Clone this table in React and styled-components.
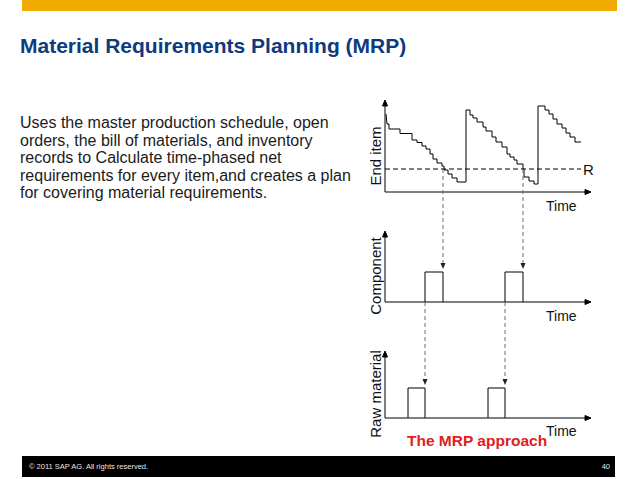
import styled, { createGlobalStyle } from "styled-components";

const GlobalStyle = createGlobalStyle`
  html, body {
    margin: 0;
    padding: 0;
    background: #ffffff;
  }
  body {
    font-family: "Liberation Sans", Arial, sans-serif;
  }
`;

const Slide = styled.div`
  width: 638px;
  height: 479px;
  display: flex;
  flex-direction: column;
  background: #ffffff;
  overflow: hidden;
`;

const TopBar = styled.div`
  height: 11px;
  margin: 0 21px 0 22px;
  background: #f0ab00;
`;

const Title = styled.h1`
  margin: 23px 0 0 20px;
  font-size: 21px;
  line-height: 24px;
  font-weight: 700;
  color: #0e3a7e;
`;

const Body = styled.div`
  margin-top: 31px;
  display: flex;
  align-items: flex-start;
`;

const Bullet = styled.p`
  width: 340px;
  margin: 0;
  padding: 25px 0 0 20px;
  font-size: 16px;
  line-height: 17.5px;
  color: #1b1b1b;
`;

const Chart = styled.svg`
  display: block;
  width: 240px;
  height: 365px;
  overflow: visible;
  font-family: "Liberation Sans", Arial, sans-serif;
`;

const Footer = styled.div`
  margin: auto 23px 2px 22px;
  height: 21px;
  background: #000000;
  color: #e6e6e6;
  display: flex;
  align-items: center;
  justify-content: space-between;
  padding: 0 5px 0 7px;
  font-size: 7.5px;
`;

const endItem =
  "M386,115 L387,125 L389,125 L389,130 L400,130 L400,134.5 L412,134.5 L412,141 L417,141 L417,143.5 L422,143.5 L422,147 L426,147 L426,150 L430,150 L430,155 L433,155 L433,160 L437,160 L437,164 L442,164 L442,167 L444,167 L444,171 L448,171 L448,175 L452,175 L452,179 L457,179 L457,183 L466,183 L466,111 " +
  "L470,111 L470,116 L473,116 L473,119 L477,119 L477,123 L483,123 L483,128 L486,128 L486,132 L492,132 L492,138 L496,138 L496,143 L502,143 L502,148 L507,148 L507,155 L510,155 L510,158 L514,158 L514,161 L517,161 L517,165 L523,165 L523,170 L524,170 L524,178 L529,178 L529,182 L534,182 L534,185 L538,185 L538,107 " +
  "L545,107 L545,111 L549,111 L549,115 L553,115 L553,120 L557,120 L557,125 L562,125 L562,129 L566,129 L566,134 L570,134 L570,138 L575,138 L575,143 L581,143";

const Axis = ({ top, base }) => (
  <g stroke="#000" strokeWidth="1" fill="none">
    <path d={`M385,${base} L385,${top + 5}`} />
    <path d={`M385,${base} L586,${base}`} />
    <path d={`M382.5,${top + 6} L385,${top} L387.5,${top + 6} Z`} fill="#000" />
    <path d={`M585,${base - 2.5} L591,${base} L585,${base + 2.5} Z`} fill="#000" />
  </g>
);

const DropArrow = ({ x, from, to }) => (
  <g>
    <path d={`M${x},${from} L${x},${to - 5}`} stroke="#6e6e6e" strokeWidth="1" strokeDasharray="4 3" fill="none" />
    <path d={`M${x - 2.5},${to - 6} L${x},${to} L${x + 2.5},${to - 6} Z`} fill="#222" />
  </g>
);

const Pulse = ({ x1, x2, top, base }) => (
  <path d={`M${x1},${base} L${x1},${top} L${x2},${top} L${x2},${base}`} stroke="#000" strokeWidth="1" fill="none" />
);

const AxisLabel = ({ cy, children }) => (
  <text
    x="0"
    y="0"
    transform={`translate(380.5 ${cy}) rotate(-90)`}
    textAnchor="middle"
    fontSize="15"
    fill="#111"
  >
    {children}
  </text>
);

const TimeLabel = ({ y }) => (
  <text x="546" y={y} fontSize="14" fill="#111">
    Time
  </text>
);

export default function App() {
  return (
    <>
      <GlobalStyle />
      <Slide>
        <TopBar />
        <Title>Material Requirements Planning (MRP)</Title>
        <Body>
          <Bullet>
            Uses the master production schedule, open orders, the bill of
            materials, and inventory records to Calculate time-phased net
            requirements for every item,and creates a plan for covering
            material requirements.
          </Bullet>
          <Chart viewBox="360 90 240 365">
            {/* end item */}
            <Axis top={101} base={193} />
            <path d={endItem} stroke="#000" strokeWidth="1" fill="none" />
            <path d="M385,170 L581,170" stroke="#000" strokeWidth="1" strokeDasharray="5 3" />
            <text x="583" y="176" fontSize="15" fill="#111">R</text>
            <AxisLabel cy={157}>End item</AxisLabel>
            <TimeLabel y={212} />

            {/* component */}
            <DropArrow x={443} from={170} to={270} />
            <DropArrow x={523} from={170} to={270} />
            <Axis top={232} base={303} />
            <Pulse x1={425} x2={443} top={273} base={303} />
            <Pulse x1={505} x2={523} top={273} base={303} />
            <AxisLabel cy={277}>Component</AxisLabel>
            <TimeLabel y={322} />

            {/* raw material */}
            <DropArrow x={425} from={303} to={386} />
            <DropArrow x={505} from={303} to={386} />
            <Axis top={352} base={419} />
            <Pulse x1={408} x2={425} top={389} base={419} />
            <Pulse x1={488} x2={505} top={389} base={419} />
            <AxisLabel cy={395}>Raw material</AxisLabel>
            <TimeLabel y={437} />

            <text x="407" y="447" fontSize="15.5" fontWeight="700" fill="#e0201c">
              The MRP approach
            </text>
          </Chart>
        </Body>
        <Footer>
          <span>© 2011 SAP AG. All rights reserved.</span>
          <span>40</span>
        </Footer>
      </Slide>
    </>
  );
}
